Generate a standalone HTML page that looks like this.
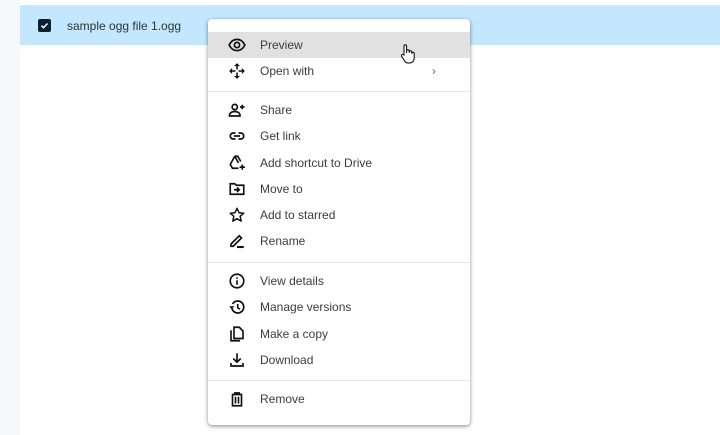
<!DOCTYPE html>
<html><head><style>
body{margin:0;width:720px;height:435px;background:#fff;position:relative;overflow:hidden;font-family:"Liberation Sans",sans-serif;color:#1f1f1f}
.strip{position:absolute;left:0;top:0;width:20px;height:435px;background:#f6f8fc}
.topline{position:absolute;left:20px;top:5px;right:0;height:1px;background:#e3e3e3}
.row{position:absolute;left:20px;top:6px;right:0;height:39px;background:#c2e7ff}
.cb{position:absolute;left:38px;top:19px;width:13px;height:13px;background:#0b1f33;border-radius:2px}
.fname{position:absolute;left:67px;top:19px;font-size:12px;color:#333}
.menu{position:absolute;left:208px;top:19px;width:262px;height:406px;background:#fff;border-radius:4px;box-shadow:0 1px 3px rgba(0,0,0,.35),0 2px 6px rgba(0,0,0,.15)}
.item{position:absolute;left:0;width:262px;height:26px;font-size:12px;line-height:26px;color:#3c3c3c}
.item span{position:absolute;left:52px}
.item svg{position:absolute;left:20px;top:4px;width:18px;height:18px}
.hov{background:#e1e1e1}
.div{position:absolute;left:0;width:262px;height:1px;background:#e6e6e6}
</style></head><body>
<div class="strip"></div><div class="topline"></div><div class="row"></div>
<div class="cb"><svg width="13" height="13" viewBox="0 0 13 13"><path d="M3.5 6.7l2 2 4-4.2" stroke="#fff" stroke-width="1.5" fill="none"/></svg></div>
<div class="fname">sample ogg file 1.ogg</div>
<div class="menu">
<div class="item hov" style="top:13px"><svg viewBox="0 0 24 24"><path d="M1.5 12C4 7 8 4.5 12 4.5S20 7 22.5 12C20 17 16 19.5 12 19.5S4 17 1.5 12z" fill="none" stroke="#111" stroke-width="2.2"/><circle cx="12" cy="12" r="3.5" fill="none" stroke="#111" stroke-width="2.2"/></svg><span>Preview</span></div>
<div class="item" style="top:39px"><svg viewBox="0 0 24 24"><path d="M12 1.5l4 4h-3v4.5h-2V5.5H8zM12 22.5l-4-4h3V14h2v4.5h3zM1.5 12l4-4v3H10v2H5.5v3zM22.5 12l-4 4v-3H14v-2h4.5V8z" fill="#111"/></svg><span>Open with</span><span style="left:224px;color:#666">›</span></div>
<div class="div" style="top:72px"></div>
<div class="item" style="top:78px"><svg viewBox="0 0 24 24"><circle cx="9" cy="8" r="3.5" fill="none" stroke="#111" stroke-width="2.2"/><path d="M2 19c0-3 3-5 7-5s7 2 7 5v1H2z" fill="none" stroke="#111" stroke-width="2.2"/><path d="M19 5v6M16 8h6" stroke="#111" stroke-width="2.2"/></svg><span>Share</span></div>
<div class="item" style="top:104px"><svg viewBox="0 0 24 24"><path d="M10 8H7a4 4 0 000 8h3M14 8h3a4 4 0 010 8h-3M8 12h8" fill="none" stroke="#111" stroke-width="2.2"/></svg><span>Get link</span></div>
<div class="item" style="top:131px"><svg viewBox="0 0 24 24"><path d="M9 3h4l4 7M9 3L3 14l3 5h8M9 3l5 9" fill="none" stroke="#111" stroke-width="2.2"/><path d="M19 14v7M15.5 17.5h7" stroke="#111" stroke-width="2.2"/></svg><span>Add shortcut to Drive</span></div>
<div class="item" style="top:157px"><svg viewBox="0 0 24 24"><path d="M3 5h6l2 2h10v12H3z" fill="none" stroke="#111" stroke-width="2.2"/><path d="M8 13h7M12 10l3 3-3 3" fill="none" stroke="#111" stroke-width="2.2"/></svg><span>Move to</span></div>
<div class="item" style="top:183px"><svg viewBox="0 0 24 24"><path d="M12 3l2.7 6 6.3.6-4.8 4.2 1.4 6.4L12 16.9l-5.6 3.3 1.4-6.4L3 9.6 9.3 9z" fill="none" stroke="#111" stroke-width="2" stroke-linejoin="round"/></svg><span>Add to starred</span></div>
<div class="item" style="top:209px"><svg viewBox="0 0 24 24"><path d="M4 19v-3L15 5l3 3L7 19z" fill="none" stroke="#111" stroke-width="2.2"/><path d="M12 20h9" stroke="#111" stroke-width="2.8"/></svg><span>Rename</span></div>
<div class="div" style="top:243px"></div>
<div class="item" style="top:249px"><svg viewBox="0 0 24 24"><circle cx="12" cy="12" r="9" fill="none" stroke="#111" stroke-width="2.2"/><path d="M12 11v6M12 7v2" stroke="#111" stroke-width="2.2"/></svg><span>View details</span></div>
<div class="item" style="top:275px"><svg viewBox="0 0 24 24"><path d="M5 12a8 8 0 108-8 8 8 0 00-7 4" fill="none" stroke="#111" stroke-width="2.2"/><path d="M1.5 11l3.5 4 3.5-4z" fill="#111"/><path d="M13 8v5l3 2" fill="none" stroke="#111" stroke-width="2.2"/></svg><span>Manage versions</span></div>
<div class="item" style="top:302px"><svg viewBox="0 0 24 24"><path d="M4 7v14h12" fill="none" stroke="#111" stroke-width="2.2"/><path d="M8 3h7l5 5v10H8z" fill="none" stroke="#111" stroke-width="2.2"/></svg><span>Make a copy</span></div>
<div class="item" style="top:328px"><svg viewBox="0 0 24 24"><path d="M12 3v11M7 10l5 5 5-5M4 16v4h16v-4" fill="none" stroke="#111" stroke-width="2.2"/></svg><span>Download</span></div>
<div class="div" style="top:361px"></div>
<div class="item" style="top:367px"><svg viewBox="0 0 24 24"><path d="M5 6h14M9 6V4h6v2M6 6v15h12V6M10 9v9M14 9v9" fill="none" stroke="#111" stroke-width="2.2"/></svg><span>Remove</span></div>
</div>
<svg style="position:absolute;left:399px;top:43px" width="18" height="22" viewBox="0 0 18 22"><path d="M5 12V3a1.3 1.3 0 012.6 0v7V8a1.3 1.3 0 012.6 0v2-1a1.3 1.3 0 012.6 0v2-.5a1.2 1.2 0 012.4 0V15c0 3-2 5-5 5H9c-2 0-3-1-4-3l-2.5-4a1.2 1.2 0 012-1.2z" fill="#fff" stroke="#000" stroke-width="1"/></svg>
</body></html>
